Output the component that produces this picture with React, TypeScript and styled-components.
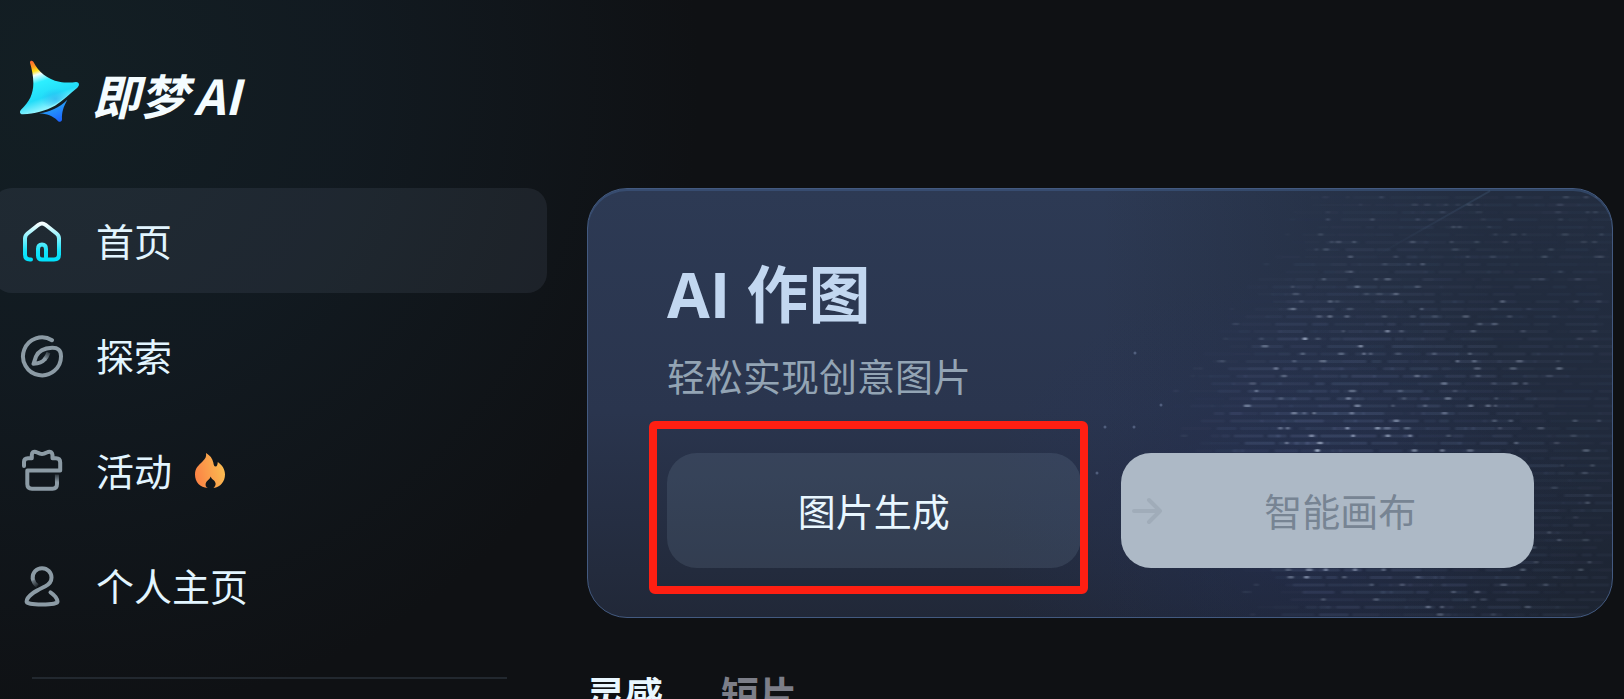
import React from "react";
import styled, { createGlobalStyle } from "styled-components";

const GlobalStyle = createGlobalStyle`
  *, *::before, *::after { box-sizing: border-box; }
  html, body { margin: 0; padding: 0; background: #0f1014; }
  body {
    font-family: "Open Sans", "Noto Sans CJK SC", sans-serif;
    overflow: hidden;
  }
  button { font: inherit; border: 0; padding: 0; background: none; cursor: pointer; }
  h1, h2, p, ul { margin: 0; padding: 0; }
`;

const Page = styled.div`
  display: flex;
  height: 100vh;
  overflow: hidden;
  background:
    radial-gradient(ellipse 640px 640px at 60px 80px, #131f24 0%, rgba(18, 27, 34, 0.9) 45%, rgba(15, 17, 20, 0) 100%),
    #0f1114;
`;

const Sidebar = styled.aside`
  flex: none;
  width: 587px;
  padding: 60px 40px 0 0;
`;

const Brand = styled.a`
  display: flex;
  align-items: center;
  gap: 12px;
  height: 64px;
  margin: 0 0 64px 20px;
  color: #f4fcff;
  text-decoration: none;
`;

const BrandName = styled.span`
  display: flex;
  align-items: center;
  gap: 6px;
  padding-top: 4px;
  font-family: "Noto Sans CJK SC", sans-serif;
  font-size: 48px;
  line-height: 48px;
  font-weight: 700;
  font-style: italic;
  white-space: nowrap;
`;

const NavList = styled.ul`
  display: flex;
  flex-direction: column;
  gap: 10px;
  margin-left: -8px;
  list-style: none;
`;

const NavLink = styled.a<{ $active?: boolean }>`
  display: flex;
  align-items: center;
  height: 105px;
  padding-left: 28px;
  border-radius: 20px;
  background: ${(p) => (p.$active ? "rgba(190, 210, 240, 0.08)" : "transparent")};
  color: #e2f5ff;
  font-size: 38px;
  line-height: 48px;
  text-decoration: none;

  > svg:first-child { margin-right: 32px; }
`;

const FlameSlot = styled.span`
  display: flex;
  margin-left: 23px;
`;

const Divider = styled.hr`
  height: 2px;
  margin: 39px 40px 0 32px;
  border: 0;
  background: #22282f;
`;

const Main = styled.main`
  flex: 1;
  min-width: 0;
  padding: 188px 11px 0 0;
`;

const Card = styled.section`
  position: relative;
  height: 430px;
  padding: 67px 78px 0 79px;
  overflow: hidden;
  border: 1px solid #435a80;
  border-radius: 40px;
  box-shadow: inset 0 2px 0 rgba(70, 105, 155, 0.4);
  background:
    radial-gradient(ellipse 300px 240px at 68% 76%, rgba(38, 50, 92, 0.45), transparent),
    linear-gradient(to right, transparent 50%, rgba(24, 32, 44, 0.5) 88%),
    linear-gradient(to bottom, #2d3a54 0%, #2a354e 52%, #212838 100%);
`;

const Texture = styled.svg`
  position: absolute;
  inset: 0 0 0 auto;
  width: 520px;
  height: 430px;
`;

const CardBody = styled.div`
  position: relative;
`;

const CardTitle = styled.h1`
  color: #c2d7f0;
  font-size: 62px;
  line-height: 76px;
  font-weight: 700;
`;

const CardText = styled.p`
  margin-top: 20px;
  color: #93a4b4;
  font-size: 38px;
  line-height: 48px;
`;

const Actions = styled.div`
  display: grid;
  grid-template-columns: 1fr 1fr;
  gap: 40px;
  margin-top: 53px;
`;

const ActionSlot = styled.div`
  position: relative;
  display: flex;
`;

const ActionButton = styled.button<{ $light?: boolean }>`
  display: flex;
  flex: 1;
  align-items: center;
  height: 115px;
  padding: ${(p) => (p.$light ? "0 16px 0 10px" : "0")};
  border-radius: 30px;
  background: ${(p) => (p.$light ? "#adb9c6" : "rgba(150, 180, 200, 0.14)")};
  color: ${(p) => (p.$light ? "#778493" : "#e9f7ff")};
  font-size: 38px;
  line-height: 48px;
`;

const ActionLabel = styled.span`
  flex: 1;
  text-align: center;
`;

const Highlight = styled.div`
  position: absolute;
  inset: -32px -7px -26px -18px;
  border: 8px solid #ff1f12;
  border-radius: 6px;
  pointer-events: none;
`;

const Tabs = styled.nav`
  display: flex;
  gap: 58px;
  margin-top: 52px;
`;

const Tab = styled.button<{ $active?: boolean }>`
  color: ${(p) => (p.$active ? "#e9f7ff" : "#7c7e88")};
  font-size: 38px;
  line-height: 48px;
  font-weight: 700;
`;

const LogoMark = () => (
  <svg width="60" height="64" viewBox="0 0 180 192" aria-hidden="true">
    <defs>
      <linearGradient id="markBody" x1="0.25" y1="0" x2="0.62" y2="1">
        <stop offset="0" stopColor="#ff6a2c" />
        <stop offset="0.09" stopColor="#ff9a1e" />
        <stop offset="0.17" stopColor="#ffe21a" />
        <stop offset="0.24" stopColor="#f2ffff" />
        <stop offset="0.38" stopColor="#2defff" />
        <stop offset="0.65" stopColor="#22dcf8" />
        <stop offset="0.85" stopColor="#8ff3ff" />
      </linearGradient>
      <radialGradient id="markGlow" cx="0.58" cy="0.62" r="0.3">
        <stop offset="0" stopColor="#2bb2f0" stopOpacity="0.7" />
        <stop offset="1" stopColor="#2bb2f0" stopOpacity="0" />
      </radialGradient>
      <linearGradient id="markTail" x1="0.2" y1="0" x2="0.75" y2="1">
        <stop offset="0" stopColor="#2cc0f4" />
        <stop offset="1" stopColor="#1c62ff" />
      </linearGradient>
    </defs>
    <path
      d="M30 8C29 2 36 0 40 5C56 36 82 58 118 65C138 69 154 68 168 66C178 66 180 76 172 83C150 101 130 121 105 137C77 153 44 160 9 163C0 164 -3 155 3 149C28 127 40 102 40 70C40 46 35 25 30 8Z"
      fill="url(#markBody)"
    />
    <path
      d="M42 50C60 72 84 85 118 82C138 80 150 76 168 74C150 100 130 118 105 132C77 147 50 154 22 158C42 130 52 104 48 74Z"
      fill="url(#markGlow)"
    />
    <path
      d="M57 160C91 155 116 144 142 119C130 141 125 157 126 178C126 186 119 188 113 182C97 167 82 162 57 160Z"
      fill="url(#markTail)"
    />
  </svg>
);

const LineIcon = ({ children, stroke = "#8c9ba5" }: { children: React.ReactNode; stroke?: string }) => (
  <svg
    width="44"
    height="44"
    viewBox="0 0 44 44"
    fill="none"
    stroke={stroke}
    strokeWidth="4"
    strokeLinecap="round"
    strokeLinejoin="round"
    aria-hidden="true"
  >
    {children}
  </svg>
);

const HomeIcon = () => (
  <LineIcon stroke="url(#homeStroke)">
    <defs>
      <linearGradient id="homeStroke" gradientUnits="userSpaceOnUse" x1="0" y1="3" x2="0" y2="42">
        <stop offset="0.05" stopColor="#f6feff" />
        <stop offset="0.75" stopColor="#14e4fb" />
        <stop offset="1" stopColor="#00e0fb" />
      </linearGradient>
    </defs>
    <path d="M11 40.500H10Q5 40.500 5 35.500V19.500Q5 16.500 7.500 14.500L18.500 5.800Q22 3.200 25.500 5.800L36.500 14.500Q39 16.500 39 19.500V35.500Q39 40.500 34 40.500H22Q18 40.500 18 36.500V30Q18 25.500 22 25.500Q26 25.500 26 30V38" />
  </LineIcon>
);

const ExploreIcon = () => (
  <LineIcon>
    <defs>
      <linearGradient id="leafFade" gradientUnits="userSpaceOnUse" x1="24" y1="25" x2="29" y2="18">
        <stop offset="0" stopColor="#8c9ba5" />
        <stop offset="1" stopColor="#8c9ba5" stopOpacity="0.2" />
      </linearGradient>
    </defs>
    <path d="M32 6.200A19 19 0 1 0 41 22C41 16 37.500 13.600 32 13.800C24 14.200 18.500 17 16 22.500L13.500 29.800C18 29.500 22 28.500 24.500 25.500" />
    <path d="M24.500 25.500Q27 23 28.500 18.500" stroke="url(#leafFade)" strokeLinecap="butt" />
  </LineIcon>
);

const EventIcon = () => (
  <LineIcon>
    <defs>
      <linearGradient id="eventFade" gradientUnits="userSpaceOnUse" x1="0" y1="24" x2="0" y2="33">
        <stop offset="0" stopColor="#8c9ba5" stopOpacity="0.1" />
        <stop offset="1" stopColor="#8c9ba5" />
      </linearGradient>
    </defs>
    <path d="M4 17V13Q4 9.500 8 9.300H11.800V6Q12 2 16 3L20 4.700Q22 5.400 24 4.700L28 3Q32 2 32.500 6V9.300H36Q40.200 9.300 40.200 13.500V21.500H7.300V35Q7.300 39.700 12 39.700H32.500Q37 39.700 37 35" />
    <path d="M37 35L36.900 25.500" stroke="url(#eventFade)" strokeLinecap="butt" />
  </LineIcon>
);

const PersonIcon = () => (
  <LineIcon>
    <defs>
      <linearGradient id="personFade" gradientUnits="userSpaceOnUse" x1="12" y1="14" x2="18" y2="22">
        <stop offset="0" stopColor="#8c9ba5" />
        <stop offset="1" stopColor="#8c9ba5" stopOpacity="0.1" />
      </linearGradient>
    </defs>
    <path d="M12.700 14.500C12.200 8.500 16.500 4.200 22 4.200C27.500 4.200 31.500 8.500 31.500 13.500C31.500 18 29 20.500 25 22.500C17 26.500 7 31 6.600 37.500Q6.500 40.500 22 40.500Q37.600 40.500 37.500 37.500C37 33.500 34.500 31 30.500 28.300" />
    <path d="M12.700 14.500C13.200 17.500 14.500 20 17.500 22" stroke="url(#personFade)" strokeLinecap="butt" />
  </LineIcon>
);

const FlameIcon = () => (
  <svg width="30" height="36" viewBox="0 0 30 36" aria-hidden="true">
    <defs>
      <linearGradient id="flame" x1="0" y1="0.6" x2="1" y2="0.3">
        <stop offset="0" stopColor="#fb8345" />
        <stop offset="1" stopColor="#fbc052" />
      </linearGradient>
    </defs>
    <path
      d="M11 0C15 2.300 17.500 5.500 18.300 9.500C18.700 12 19.200 13.500 20.500 13.500C22.200 13.500 22.500 11.500 22.800 9C27 12 30 16 30 21.500C30 28.500 25.500 34 18.500 35C20.500 33 21.300 31 20 28.700C19 27 16.500 26.500 15.600 23.500C15 26.500 11.500 27.500 10.700 30.500C10.200 32.500 11 34 12.800 35C5 34.500 0 29 0 21.500C0 15 3.500 12.500 7.500 8.500C10.200 6 11.700 3.500 11 0Z"
      fill="url(#flame)"
    />
  </svg>
);

const ArrowIcon = () => (
  <svg width="32" height="30" viewBox="0 0 32 30" fill="none" stroke="#a0acb9" strokeWidth="4" strokeLinecap="round" strokeLinejoin="round" aria-hidden="true">
    <path d="M3 15H29M18 4L29 15L18 26" />
  </svg>
);

type Fleck = { x: number; y: number; w: number; o: number; spark: boolean };

/* Rows of soft streaks with scattered sparks, denser and brighter toward the lower middle. */
const buildFlecks = (): Fleck[] => {
  let seed = 20;
  const next = () => {
    seed = (seed * 1664525 + 1013904223) % 4294967296;
    return seed / 4294967296;
  };
  const flecks: Fleck[] = [];
  for (let row = 0; row < 57; row += 1) {
    const y = 7 + row * 7.45;
    const edge = y < 210 ? 210 - y * 0.66 : 72 + (y - 210) * 0.4;
    const brightness = (x: number) => {
      const far = Math.hypot((x - 230) / 290, (y - 290) / 270);
      const entry = Math.min(1, Math.max(0.15, (x - edge) / 70));
      return Math.max(0.2, 1 - far * 0.75) * entry;
    };
    let x = edge + next() * 50;
    while (x < 508) {
      const w = 8 + next() * 26;
      flecks.push({ x, y, w, o: (0.05 + next() * 0.15) * brightness(x), spark: false });
      x += w + next() * 12 - 5;
    }
    const sparks = 3 + Math.floor(next() * 7);
    for (let i = 0; i < sparks; i += 1) {
      const sx = edge + next() * (508 - edge);
      flecks.push({ x: sx, y, w: 3 + next() * 4, o: (0.25 + next() * 0.4) * brightness(sx), spark: true });
    }
  }
  return flecks;
};

const flecks = buildFlecks();

const CardTexture = () => (
  <Texture viewBox="0 0 520 430" aria-hidden="true">
    <defs>
      <linearGradient id="beam" x1="0" y1="1" x2="1" y2="0">
        <stop offset="0" stopColor="#6d9ac8" stopOpacity="0" />
        <stop offset="1" stopColor="#6d9ac8" stopOpacity="0.14" />
      </linearGradient>
      <filter id="soften" x="0" y="0" width="1" height="1">
        <feGaussianBlur stdDeviation="1 0.5" />
      </filter>
    </defs>
    <g filter="url(#soften)">
      {flecks.map((f, i) => (
        <rect
          key={i}
          x={f.x}
          y={f.y}
          width={f.w}
          height={f.spark ? 2.5 : 3}
          rx="1"
          fill={f.spark ? "#cad8f0" : "#8fa5d8"}
          opacity={f.o}
        />
      ))}
    </g>
    <path d="M282 68L398 2" stroke="url(#beam)" strokeWidth="2" />
    <g fill="#8d9fc4" opacity="0.4">
      <circle cx="43" cy="164" r="1.500" />
      <circle cx="69" cy="216" r="1.500" />
      <circle cx="5" cy="284" r="1.500" />
      <circle cx="13" cy="238" r="1.500" />
      <circle cx="42" cy="238" r="1.500" />
    </g>
  </Texture>
);

export default function App() {
  return (
    <>
      <GlobalStyle />
      <Page>
        <Sidebar>
          <Brand href="#home">
            <LogoMark />
            <BrandName>
              <span>即梦</span>
              <span>AI</span>
            </BrandName>
          </Brand>
          <nav>
            <NavList>
              <li>
                <NavLink href="#home" $active aria-current="page">
                  <HomeIcon />
                  首页
                </NavLink>
              </li>
              <li>
                <NavLink href="#explore">
                  <ExploreIcon />
                  探索
                </NavLink>
              </li>
              <li>
                <NavLink href="#events">
                  <EventIcon />
                  活动
                  <FlameSlot>
                    <FlameIcon />
                  </FlameSlot>
                </NavLink>
              </li>
              <li>
                <NavLink href="#profile">
                  <PersonIcon />
                  个人主页
                </NavLink>
              </li>
            </NavList>
          </nav>
          <Divider />
        </Sidebar>
        <Main>
          <Card>
            <CardTexture />
            <CardBody>
              <CardTitle>AI 作图</CardTitle>
              <CardText>轻松实现创意图片</CardText>
              <Actions>
                <ActionSlot>
                  <ActionButton type="button">
                    <ActionLabel>图片生成</ActionLabel>
                  </ActionButton>
                  <Highlight />
                </ActionSlot>
                <ActionSlot>
                  <ActionButton type="button" $light>
                    <ArrowIcon />
                    <ActionLabel>智能画布</ActionLabel>
                  </ActionButton>
                </ActionSlot>
              </Actions>
            </CardBody>
          </Card>
          <Tabs>
            <Tab type="button" $active>灵感</Tab>
            <Tab type="button">短片</Tab>
          </Tabs>
        </Main>
      </Page>
    </>
  );
}
